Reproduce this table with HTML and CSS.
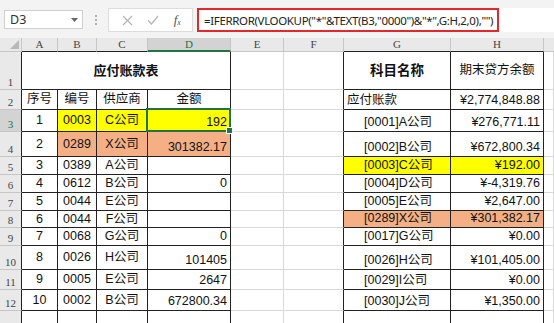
FILE: index.html
```html
<!DOCTYPE html>
<html>
<head>
<meta charset="utf-8">
<link rel="stylesheet" href="styles.css">
</head>
<body>
<div class="fbar">
  <div class="namebox"><span>D3</span><svg class="dd" width="7" height="4" viewBox="0 0 7 4"><path d="M0 0h7L3.5 4z" fill="#666"/></svg></div>
  <div class="dots"><i></i><i></i><i></i></div>
  <div class="btns">
    <svg width="11" height="11" viewBox="0 0 11 11"><path d="M1 1l9 9M10 1l-9 9" stroke="#b4b4b4" stroke-width="1.2" fill="none"/></svg>
    <svg width="12" height="10" viewBox="0 0 12 10"><path d="M1 5.5l3.5 3.5L11 1" stroke="#b4b4b4" stroke-width="1.2" fill="none"/></svg>
    <span class="fx">f<sub>x</sub></span>
  </div>
  <div class="formula"><div class="redbox">=IFERROR(VLOOKUP("*"&amp;TEXT(B3,"0000")&amp;"*",G:H,2,0),"")</div></div>
</div>

<div class="sheet">
  <!-- column headers -->
  <div class="corner"><svg width="9" height="9" viewBox="0 0 9 9"><path d="M9 0V9H0z" fill="#b8b8b8"/></svg></div>
  <div class="ch chb">A</div>
  <div class="ch chb">B</div>
  <div class="ch chb">C</div>
  <div class="ch chb chsel">D</div>
  <div class="ch">E</div>
  <div class="ch">F</div>
  <div class="ch chb">G</div>
  <div class="ch chb">H</div>
  <div class="ch chlast"></div>

  <!-- row 1 -->
  <div class="rh">1</div>
  <div class="lt title">应付账款表</div>
  <div class="c"></div><div class="c edge"></div>
  <div class="rt ctr bold big">科目名称</div>
  <div class="rt ctr">期末贷方余额</div>
  <div class="c"></div>

  <!-- row 2 -->
  <div class="rh">2</div>
  <div class="lt ctr">序号</div><div class="lt ctr">编号</div><div class="lt ctr">供应商</div><div class="lt ctr">金额</div>
  <div class="c"></div><div class="c edge"></div>
  <div class="rt bot">应付账款</div><div class="rt r">¥2,774,848.88</div>
  <div class="c"></div>

  <!-- row 3 -->
  <div class="rh rhsel">3</div>
  <div class="lt ctr">1</div><div class="lt ctr yel">0003</div><div class="lt ctr yel">C公司</div><div class="lt r yel sel">192</div>
  <div class="c"></div><div class="c edge"></div>
  <div class="rt bot ind">[0001]A公司</div><div class="rt r">¥276,771.11</div>
  <div class="c"></div>

  <!-- row 4 -->
  <div class="rh">4</div>
  <div class="lt ctr">2</div><div class="lt ctr org">0289</div><div class="lt ctr org">X公司</div><div class="lt r org">301382.17</div>
  <div class="c"></div><div class="c edge"></div>
  <div class="rt bot ind">[0002]B公司</div><div class="rt r">¥672,800.34</div>
  <div class="c"></div>

  <!-- row 5 -->
  <div class="rh">5</div>
  <div class="lt ctr">3</div><div class="lt ctr">0389</div><div class="lt ctr">A公司</div><div class="lt r"></div>
  <div class="c"></div><div class="c edge"></div>
  <div class="rt bot ind yel">[0003]C公司</div><div class="rt r yel">¥192.00</div>
  <div class="c"></div>

  <!-- row 6 -->
  <div class="rh">6</div>
  <div class="lt ctr">4</div><div class="lt ctr">0612</div><div class="lt ctr">B公司</div><div class="lt r">0</div>
  <div class="c"></div><div class="c edge"></div>
  <div class="rt bot ind">[0004]D公司</div><div class="rt r">¥-4,319.76</div>
  <div class="c"></div>

  <!-- row 7 -->
  <div class="rh">7</div>
  <div class="lt ctr">5</div><div class="lt ctr">0044</div><div class="lt ctr">E公司</div><div class="lt r"></div>
  <div class="c"></div><div class="c edge"></div>
  <div class="rt bot ind">[0005]E公司</div><div class="rt r">¥2,647.00</div>
  <div class="c"></div>

  <!-- row 8 -->
  <div class="rh">8</div>
  <div class="lt ctr">6</div><div class="lt ctr">0044</div><div class="lt ctr">F公司</div><div class="lt r"></div>
  <div class="c"></div><div class="c edge"></div>
  <div class="rt bot ind org">[0289]X公司</div><div class="rt r org">¥301,382.17</div>
  <div class="c"></div>

  <!-- row 9 -->
  <div class="rh">9</div>
  <div class="lt ctr">7</div><div class="lt ctr">0068</div><div class="lt ctr">G公司</div><div class="lt r">0</div>
  <div class="c"></div><div class="c edge"></div>
  <div class="rt bot ind">[0017]G公司</div><div class="rt r">¥0.00</div>
  <div class="c"></div>

  <!-- row 10 -->
  <div class="rh">10</div>
  <div class="lt ctr">8</div><div class="lt ctr">0026</div><div class="lt ctr">H公司</div><div class="lt r">101405</div>
  <div class="c"></div><div class="c edge"></div>
  <div class="rt bot ind">[0026]H公司</div><div class="rt r">¥101,405.00</div>
  <div class="c"></div>

  <!-- row 11 -->
  <div class="rh">11</div>
  <div class="lt ctr">9</div><div class="lt ctr">0005</div><div class="lt ctr">E公司</div><div class="lt r">2647</div>
  <div class="c"></div><div class="c edge"></div>
  <div class="rt bot ind">[0029]I公司</div><div class="rt r">¥0.00</div>
  <div class="c"></div>

  <!-- row 12 -->
  <div class="rh">12</div>
  <div class="lt ctr">10</div><div class="lt ctr">0002</div><div class="lt ctr">B公司</div><div class="lt r">672800.34</div>
  <div class="c"></div><div class="c edge"></div>
  <div class="rt bot ind">[0030]J公司</div><div class="rt r">¥1,350.00</div>
  <div class="c"></div>

  <!-- row 13 -->
  <div class="rh"></div>
  <div class="lt"></div><div class="lt"></div><div class="lt"></div><div class="lt"></div>
  <div class="c"></div><div class="c edge"></div>
  <div class="rt"></div><div class="rt"></div>
  <div class="c"></div>
</div>
</body>
</html>
```

FILE: styles.css
```css
* { box-sizing: border-box; }
html, body { margin: 0; padding: 0; }
body {
  width: 554px;
  height: 323px;
  overflow: hidden;
  background: #f3f3f3;
  font-family: "Noto Sans CJK SC", "Noto Sans", sans-serif;
}

/* formula bar */
.fbar {
  height: 38px;
  display: flex;
  align-items: flex-start;
  padding-top: 8px;
}
.namebox {
  margin-left: 4px;
  margin-top: 2px;
  width: 79px;
  height: 19px;
  background: #fff;
  border: 1px solid #d0d0d0;
  display: flex;
  align-items: center;
  justify-content: space-between;
  padding: 0 4px 0 5px;
  font-family: "Noto Sans", "Liberation Sans", sans-serif;
  font-size: 12.5px;
  color: #333;
}
.dots {
  width: 25px;
  height: 24px;
  display: flex;
  flex-direction: column;
  align-items: center;
  justify-content: center;
  gap: 2px;
}
.dots i {
  display: block;
  width: 2px;
  height: 2px;
  background: #b0b0b0;
}
.btns {
  width: 85px;
  height: 24px;
  background: #fff;
  border: 1px solid #dcdcdc;
  display: flex;
  align-items: center;
  justify-content: space-around;
  padding: 0 4px 0 6px;
}
.fx {
  font-family: "Liberation Serif", serif;
  font-style: italic;
  font-size: 13px;
  color: #555;
  line-height: 1;
}
.fx sub { font-size: 8px; vertical-align: -1px; }
.formula {
  margin-left: 4px;
  flex: 1;
  height: 24px;
  background: #fff;
}
.redbox {
  width: 302px;
  height: 24px;
  border: 2px solid #e0282d;
  display: flex;
  align-items: center;
  padding-left: 5px;
  font-family: "Noto Sans", sans-serif;
  font-size: 11.5px;
  letter-spacing: -0.35px;
  color: #222;
  white-space: nowrap;
}

/* sheet grid */
.sheet {
  display: grid;
  grid-template-columns: 22px 36px 39px 51px 83px 53px 60px 107px 93px 10px;
  grid-template-rows: 14px 38px 20px 22px 25px 18px 18px 18px 17px 18px 24px 20px 21px 20px;
  background: #fff;
  font-family: "Liberation Sans", "Noto Sans CJK SC", sans-serif;
  font-size: 12.5px;
  color: #111;
}
.corner, .ch {
  background: #e9e9e9;
  border-bottom: 1px solid #c6c6c6;
  border-right: 1px solid #c6c6c6;
}
.corner {
  display: flex;
  align-items: flex-end;
  justify-content: flex-end;
  padding: 0 2px 2px 0;
}
.ch {
  font-family: "Liberation Serif", serif;
  font-size: 11px;
  color: #444;
  display: flex;
  align-items: center;
  justify-content: center;
  line-height: 1;
}
.chb { border-bottom-color: #222; }
.chsel {
  background: #d3d3d3;
  color: #217346;
  border-bottom: 2px solid #217346;
}
.chlast { border-right: none; }
.rh {
  background: #e9e9e9;
  border-right: 1px solid #222;
  border-bottom: 1px solid #c6c6c6;
  font-family: "Liberation Serif", serif;
  font-size: 11px;
  color: #444;
  display: flex;
  align-items: flex-end;
  justify-content: center;
  padding-bottom: 1px;
  line-height: 1;
}
.rhsel {
  background: #d3d3d3;
  color: #217346;
}
.c, .lt, .rt {
  display: flex;
  align-items: flex-end;
  padding: 0 3px 1px 3px;
  white-space: nowrap;
  line-height: 15px;
  overflow: hidden;
}
.c {
  border-right: 1px solid #d9d9d9;
  border-bottom: 1px solid #d9d9d9;
}
.c.edge { border-right-color: #222; }
.lt, .rt {
  border-right: 1px solid #222;
  border-bottom: 1px solid #222;
}
.title {
  grid-column: span 4;
  justify-content: center;
  align-items: center;
  font-weight: bold;
  font-size: 13px;
}
.ctr { justify-content: center; align-items: center; padding-bottom: 0; }
.r { justify-content: flex-end; }
.bot { align-items: flex-end; }
.bold { font-weight: bold; }
.big { font-size: 13.5px; }
.ind { padding-left: 20px; }
.yel { background: #ffff00; }
.org { background: #f4b084; }
.sel { position: relative; overflow: visible; }
.sel::after {
  content: "";
  position: absolute;
  left: -2px;
  top: -2px;
  right: -1px;
  bottom: -1px;
  border: 2px solid #217346;
}
.sel::before {
  content: "";
  position: absolute;
  right: -3px;
  bottom: -3px;
  width: 5px;
  height: 5px;
  background: #217346;
  border: 1px solid #fff;
  z-index: 1;
}
```
